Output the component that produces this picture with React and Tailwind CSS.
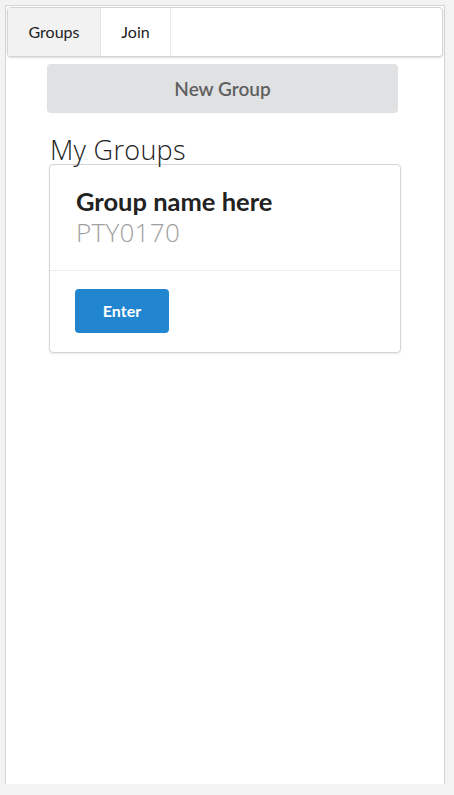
import React from "react";

const App = () => {
  return (
    <div className="min-h-[795px] bg-[#f3f3f3] pl-[5px] pr-[9px] pt-[5px] pb-[11px] font-['Lato',sans-serif]">
      <div className="h-[779px] bg-white border-x border-t border-[#d4d4d5] px-[1px] pt-[1px]">
        {/* Menu */}
        <div className="flex h-[50px] border border-[#d4d4d5] rounded-[4px] shadow-[0_1px_2px_0_rgba(34,36,38,0.15)] bg-white">
          <div className="w-[93px] flex items-center justify-center bg-[#f2f2f2] border-r border-[#e5e5e5] text-[16px] text-[#222]">
            Groups
          </div>
          <div className="w-[70px] flex items-center justify-center border-r border-[#ebebeb] text-[16px] text-[#222]">
            Join
          </div>
        </div>

        {/* New Group */}
        <div className="px-[40px] pt-[7px]">
          <button className="w-[351px] h-[49px] pt-[2px] rounded-[4px] bg-[#e0e1e2] text-[19px] font-semibold text-[#5f5f5f]">
            New Group
          </button>
        </div>

        {/* My Groups */}
        <div className="pl-[42px] pt-[22px]">
          <div className="pl-[1px] font-['Open_Sans',sans-serif] font-light text-[27px] leading-[29px] text-[#222] tracking-[0.3px]">
            My Groups
          </div>
          <div className="w-[352px] h-[189px] rounded-[4px] border border-[#d4d4d5] shadow-[0_1px_2px_0_rgba(34,36,38,0.1)] flex flex-col">
            <div className="h-[106px] px-[26px] pt-[20px] border-b border-[#ededed]">
              <div className="text-[25.5px] leading-[32px] font-bold text-[#222]">Group name here</div>
              <div className="font-['Open_Sans',sans-serif] font-light text-[26px] leading-[30px] text-[#a0a0a0] tracking-[0.3px]">
                PTY0170
              </div>
            </div>
            <div className="px-[25px] pt-[18px]">
              <button className="w-[94px] h-[44px] rounded-[4px] bg-[#2185d0] text-white font-bold text-[16px]">
                Enter
              </button>
            </div>
          </div>
        </div>
      </div>
    </div>
  );
};

export default App;
